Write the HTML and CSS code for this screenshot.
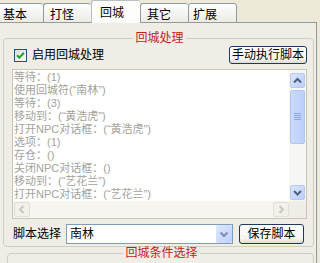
FILE: index.html
```html
<!DOCTYPE html>
<html>
<head>
<meta charset="utf-8">
<link rel="stylesheet" href="styles.css">
</head>
<body>
<div class="window">
  <div class="tabs">
    <div class="tab tab-first">基本</div>
    <div class="tab tab-2">打怪</div>
    <div class="tab tab-active">回城</div>
    <div class="tab tab-4">其它</div>
    <div class="tab tab-5">扩展</div>
    <div class="tab-fill"></div>
  </div>
  <div class="page">
    <fieldset class="group group-main">
      <legend>回城处理</legend>
      <div class="row-top">
        <label class="check">
          <span class="box">
            <svg width="13" height="13" viewBox="0 0 13 13">
              <defs>
                <linearGradient id="cbg" x1="0" y1="0" x2="1" y2="1">
                  <stop offset="0" stop-color="#dcdcd6"/>
                  <stop offset="1" stop-color="#ffffff"/>
                </linearGradient>
              </defs>
              <rect x="0.5" y="0.5" width="12" height="12" fill="url(#cbg)" stroke="#1c5180"/>
              <path d="M3 6.2 L5.3 8.6 L10 3.8" fill="none" stroke="#21a121" stroke-width="2"/>
            </svg>
          </span>启用回城处理</label>
        <button class="btn btn-run">手动执行脚本</button>
      </div>
      <div class="listbox">
        <div class="list-text">
          <div>等待：(1)</div>
          <div>使用回城符(“南林”)</div>
          <div>等待：(3)</div>
          <div>移动到：(“黄浩虎”)</div>
          <div>打开NPC对话框：(“黄浩虎”)</div>
          <div>选项：(1)</div>
          <div>存仓：()</div>
          <div>关闭NPC对话框：()</div>
          <div>移动到：(“艺花兰”)</div>
          <div>打开NPC对话框：(“艺花兰”)</div>
        </div>
        <div class="vscroll">
          <div class="sbtn">
            <svg width="15" height="15" viewBox="0 0 15 15"><path d="M4 9.5 L7.5 6 L11 9.5" fill="none" stroke="#4d6185" stroke-width="2"/></svg>
          </div>
          <div class="thumb">
            <svg width="7" height="8" viewBox="0 0 7 8">
              <path d="M0 0.5 H7 M0 2.5 H7 M0 4.5 H7 M0 6.5 H7" stroke="#8ea6de" stroke-width="1"/>
            </svg>
          </div>
          <div class="track"></div>
          <div class="sbtn">
            <svg width="15" height="15" viewBox="0 0 15 15"><path d="M4 6 L7.5 9.5 L11 6" fill="none" stroke="#4d6185" stroke-width="2"/></svg>
          </div>
        </div>
        <div class="hscroll">
          <div class="hbtn">
            <svg width="14" height="13" viewBox="0 0 14 13"><path d="M8.5 3 L5 6.5 L8.5 10" fill="none" stroke="#c8c7bd" stroke-width="2"/></svg>
          </div>
          <div class="htrack"></div>
          <div class="hbtn">
            <svg width="14" height="13" viewBox="0 0 14 13"><path d="M5.5 3 L9 6.5 L5.5 10" fill="none" stroke="#c8c7bd" stroke-width="2"/></svg>
          </div>
        </div>
        <div class="corner"></div>
      </div>
      <div class="row-bottom">
        <span class="lbl">脚本选择</span>
        <div class="combo">
          <span class="combo-text">南林</span>
          <span class="drop">
            <svg width="16" height="18" viewBox="0 0 16 18"><path d="M4.5 7.5 L8 11 L11.5 7.5" fill="none" stroke="#7a8fbd" stroke-width="2"/></svg>
          </span>
        </div>
        <button class="btn btn-save">保存脚本</button>
      </div>
    </fieldset>
    <fieldset class="group group-cond">
      <legend>回城条件选择</legend>
    </fieldset>
  </div>
</div>
</body>
</html>
```

FILE: styles.css
```css
html, body {
  margin: 0;
  padding: 0;
}

body {
  width: 320px;
  height: 263px;
  overflow: hidden;
  background: #ece9d8;
  font-family: "Liberation Sans", "Noto Sans CJK SC", sans-serif;
  font-size: 12px;
  color: #000;
}

.window {
  width: 317px;
  height: 263px;
  overflow: hidden;
}

/* ---------- tabs ---------- */
.tabs {
  display: flex;
  align-items: flex-end;
  height: 23px;
}

.tab {
  box-sizing: border-box;
  height: 20px;
  padding-top: 4px;
  line-height: 14px;
  white-space: nowrap;
  border: 1px solid #919b9c;
  border-right: none;
  border-radius: 3px 3px 0 0;
  background: linear-gradient(#fefefe, #ecebe5);
}

.tab-first {
  width: 43px;
  padding-left: 3px;
  border-left: none;
  border-radius: 0 3px 0 0;
}

.tab-2 {
  width: 48px;
  padding-left: 6px;
}

.tab-active {
  height: 23px;
  width: 49px;
  padding-left: 8px;
  padding-top: 5px;
  background: #fdfdfc;
  border-color: #b9bebf;
  border-bottom: none;
}

.tab-4 {
  width: 48px;
  padding-left: 6px;
}

.tab-5 {
  width: 49px;
  padding-left: 4px;
  border-right: 1px solid #919b9c;
}

.tab-fill {
  flex: 1;
  height: 0;
  border-bottom: 1px solid #919b9c;
}

/* ---------- page ---------- */
.page {
  box-sizing: border-box;
  height: 240px;
  padding: 8px 2px 0 3px;
  background: #efede5;
  border-right: 1px solid #919b9c;
}

.group {
  margin: 0;
  min-width: 0;
  border: 1px solid #d0cfbf;
  border-radius: 4px;
  padding: 1px 6px 2px 8px;
}

.group legend {
  margin: 0 auto;
  padding: 0 2px;
  color: #c81a1a;
  font-size: 12px;
  line-height: 14px;
}

.group-cond {
  margin-left: 4px;
  padding-bottom: 20px;
}

.group-cond legend {
  line-height: 12px;
}

/* ---------- top row ---------- */
.row-top {
  display: flex;
  align-items: center;
  justify-content: space-between;
  height: 18px;
  margin-bottom: 5px;
}

.check {
  display: flex;
  align-items: center;
  margin-left: 2px;
  line-height: 14px;
}

.box {
  display: flex;
  width: 13px;
  height: 13px;
  margin-right: 5px;
}

.btn {
  box-sizing: border-box;
  padding: 0;
  font-family: inherit;
  font-size: 12px;
  line-height: 14px;
  color: #000;
  border: 1px solid #1d3b5e;
  border-radius: 3px;
  background: linear-gradient(#ffffff, #f5f4ee 75%, #dedbcf);
}

.btn-run {
  width: 78px;
  height: 18px;
}

.btn-save {
  width: 65px;
  height: 20px;
  margin-left: 6px;
}

/* ---------- list box ---------- */
.listbox {
  box-sizing: border-box;
  height: 150px;
  margin-bottom: 5px;
  border: 1px solid #c9c5b5;
  background: #fff;
  display: grid;
  grid-template-columns: 1fr 17px;
  grid-template-rows: 1fr 17px;
}

.list-text {
  padding: 1px 0 0 1px;
  overflow: hidden;
  white-space: nowrap;
  font-size: 11px;
  line-height: 13px;
  color: #a3a39a;
}

.vscroll {
  display: flex;
  flex-direction: column;
  align-items: center;
  padding: 3px 0 1px;
  background: #f7f7f3;
}

.sbtn {
  box-sizing: border-box;
  width: 15px;
  height: 15px;
  display: flex;
  border: 1px solid #b7c9f3;
  border-radius: 2px;
  background: linear-gradient(135deg, #dce7fe, #b9cdfa);
}

.sbtn svg {
  margin: -1px;
}

.thumb {
  box-sizing: border-box;
  width: 15px;
  height: 54px;
  margin-top: 2px;
  display: flex;
  align-items: center;
  justify-content: center;
  border: 1px solid #b3c6f1;
  border-radius: 2px;
  background: linear-gradient(90deg, #cbdafd, #bccffa);
}

.track {
  flex: 1;
}

.hscroll {
  display: flex;
  align-items: center;
  padding-left: 1px;
  background: #f6f5f0;
}

.hbtn {
  box-sizing: border-box;
  width: 16px;
  height: 15px;
  display: flex;
  align-items: center;
  justify-content: center;
  border: 1px solid #e1e0d7;
  border-radius: 2px;
  background: #f1f0ea;
}

.htrack {
  flex: 1;
}

.corner {
  background: #efede5;
}

/* ---------- bottom row ---------- */
.row-bottom {
  display: flex;
  align-items: center;
  height: 20px;
}

.lbl {
  width: 48px;
  margin-left: 1px;
  margin-right: 5px;
  line-height: 14px;
  white-space: nowrap;
}

.combo {
  box-sizing: border-box;
  width: 167px;
  height: 20px;
  display: flex;
  align-items: center;
  border: 1px solid #7f9db9;
  background: #fff;
}

.combo-text {
  padding-left: 3px;
  line-height: 14px;
}

.drop {
  display: flex;
  width: 16px;
  height: 18px;
  margin-left: auto;
  border-radius: 2px;
  background: linear-gradient(135deg, #dde7fe, #c0d2fb);
}
```
